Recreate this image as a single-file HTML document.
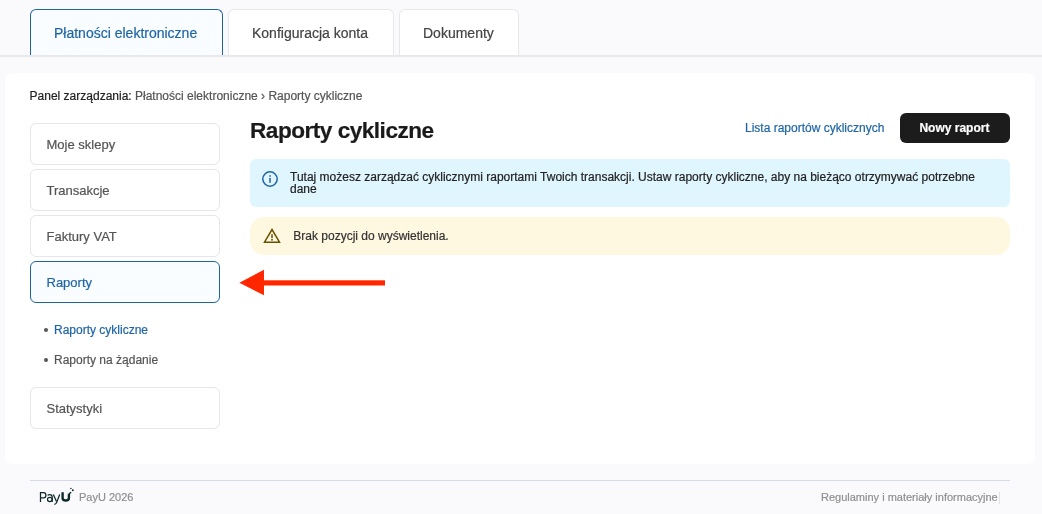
<!DOCTYPE html>
<html lang="pl">
<head>
<meta charset="utf-8">
<style>
html,body{margin:0;padding:0;}
body{width:1042px;height:514px;overflow:hidden;background:#fafafc;position:relative;font-family:"Liberation Sans",sans-serif;color:#222;}
.abs{position:absolute;white-space:nowrap;}
#root{-webkit-text-stroke-width:0.2px;}
.tab{position:absolute;top:9px;height:47px;box-sizing:border-box;border:1px solid #e8e8ea;border-bottom:none;border-radius:6px 6px 0 0;background:#fff;font-size:14px;color:#444;}
.tab span{position:absolute;left:23px;top:16px;line-height:14px;}
.tab.active{border-color:#1f65a6;background:#f9fdff;color:#1f65a6;}
.tabline{position:absolute;left:0;top:55px;width:1042px;height:2px;background:#e8e8ea;}
.card{position:absolute;left:5px;top:73px;width:1030px;height:391px;background:#fff;border-radius:8px;}
.crumb{position:absolute;left:29.6px;top:90px;font-size:12px;line-height:12px;color:#555;}
.crumb b{font-weight:normal;color:#222;}
.nav{position:absolute;left:30px;width:190px;height:42px;box-sizing:border-box;border:1px solid #e6e6e8;border-radius:6px;background:#fff;font-size:13px;color:#555;}
.nav span{position:absolute;left:15.5px;top:14px;line-height:13px;}
.nav.active{border-color:#1f65a6;background:#fafdff;color:#1f65a6;}
.sub{position:absolute;left:54px;font-size:12px;line-height:12px;color:#555;}
.sub.on{color:#1f65a6;}
.dot{position:absolute;left:44px;width:4px;height:4px;border-radius:50%;background:#555;}
h1{position:absolute;margin:0;left:250px;top:119.5px;font-size:22.6px;line-height:22px;font-weight:bold;letter-spacing:-0.5px;color:#1a1a1a;}
.link{position:absolute;left:745px;top:122px;font-size:12px;line-height:12px;color:#1f65a6;}
.btn{position:absolute;left:900px;top:113px;width:110px;height:30px;border-radius:6px;background:#1c1c1c;color:#fff;font-size:12px;font-weight:bold;}
.btn span{position:absolute;left:19.4px;top:9px;line-height:12px;}
.info{position:absolute;left:250px;top:159px;width:760px;height:48px;border-radius:6px;background:#e0f6fe;}
.info .txt{position:absolute;left:40px;top:12px;width:700px;font-size:12px;line-height:12px;color:#222;white-space:normal;}
.warn{position:absolute;left:250px;top:217px;width:760px;height:38px;border-radius:14px;background:#fff8e1;}
.warn .txt{position:absolute;left:43.3px;top:13px;font-size:12px;line-height:12px;color:#333;}
.fline{position:absolute;left:30px;top:480px;width:980px;height:1px;background:#d3dbea;}
.ftxt{position:absolute;font-size:11px;line-height:11px;color:#8f8f8f;}
</style>
</head>
<body><div id="root" style="position:absolute;left:0;top:0;width:1042px;height:514px;will-change:transform;">
<div class="tab active" style="left:30px;width:193px;"><span>Płatności elektroniczne</span></div>
<div class="tab" style="left:228px;width:166px;"><span>Konfiguracja konta</span></div>
<div class="tab" style="left:399px;width:120px;"><span>Dokumenty</span></div>
<div class="tabline"></div>

<div class="card"></div>
<div class="crumb"><b>Panel zarządzania:</b> Płatności elektroniczne › Raporty cykliczne</div>

<div class="nav" style="top:123px;"><span>Moje sklepy</span></div>
<div class="nav" style="top:169px;"><span>Transakcje</span></div>
<div class="nav" style="top:215px;"><span>Faktury VAT</span></div>
<div class="nav active" style="top:261px;"><span>Raporty</span></div>
<div class="dot" style="top:328px;"></div>
<div class="sub on" style="top:324px;">Raporty cykliczne</div>
<div class="dot" style="top:358px;"></div>
<div class="sub" style="top:354px;">Raporty na żądanie</div>
<div class="nav" style="top:387px;"><span>Statystyki</span></div>

<h1>Raporty cykliczne</h1>
<div class="link">Lista raportów cyklicznych</div>
<div class="btn"><span>Nowy raport</span></div>

<div class="info">
  <svg style="position:absolute;left:12px;top:12px" width="16" height="16" viewBox="0 0 16 16"><circle cx="8" cy="8" r="7.2" fill="none" stroke="#1f65a6" stroke-width="1.5"/><rect x="7.25" y="6.8" width="1.5" height="5" fill="#1f65a6"/><rect x="7.25" y="4.2" width="1.5" height="1.5" fill="#1f65a6"/></svg>
  <div class="txt">Tutaj możesz zarządzać cyklicznymi raportami Twoich transakcji. Ustaw raporty cykliczne, aby na bieżąco otrzymywać potrzebne dane</div>
</div>
<div class="warn">
  <svg style="position:absolute;left:13px;top:11px" width="18" height="16" viewBox="0 0 18 16"><path d="M9 1.5 L16.5 14.2 L1.5 14.2 Z" fill="none" stroke="#6b5000" stroke-width="1.5" stroke-linejoin="miter"/><rect x="8.25" y="6.2" width="1.5" height="4" fill="#6b5000"/><rect x="8.25" y="11" width="1.5" height="1.6" fill="#6b5000"/></svg>
  <div class="txt">Brak pozycji do wyświetlenia.</div>
</div>

<svg style="position:absolute;left:0;top:0" width="1042" height="514">
  <polygon points="239.4,282.8 264,269.8 264,295.2" fill="#ff2600"/>
  <rect x="263" y="280.3" width="122" height="5.2" fill="#ff2600"/>
</svg>

<div class="fline"></div>
<svg style="position:absolute;left:36px;top:484px" width="40" height="24" viewBox="36 484 40 24">
  <g fill="none" stroke="#0e2a2b" stroke-width="1.25">
    <path d="M40.5,501.9 V492.6 H43.6 C45.2,492.6 45.9,493.8 45.9,495.25 C45.9,496.7 45.2,497.9 43.6,497.9 H40.5"/>
    <path d="M47.6,495.4 C48.1,494.8 48.9,494.5 49.8,494.5 C51.4,494.5 52.2,495.3 52.2,496.9 V501.9"/>
    <ellipse cx="49.8" cy="499.5" rx="2.3" ry="2.05"/>
    <path d="M53.3,494.5 L56.5,501.5"/>
    <path d="M59.7,494.5 L56.4,502.9 Q55.9,504.3 54.3,504.3"/>
  </g>
  <path d="M62.6,492.3 V497.9 C62.6,499.9 63.8,500.5 65.8,500.5 C67.8,500.5 68.9,499.9 68.9,497.9 V492.8" fill="none" stroke="#0e2a2b" stroke-width="2.4"/>
  <path d="M67.3,495 L67.3,492 L69.9,492 Z" fill="#fafafc"/>
  <circle cx="70.5" cy="492.7" r="0.85" fill="#0e2a2b"/>
  <circle cx="72.8" cy="490.3" r="0.95" fill="#0e2a2b"/>
  <circle cx="70.9" cy="488.4" r="0.75" fill="#0e2a2b"/>
</svg>
<div class="ftxt" style="left:79px;top:492px;">PayU 2026</div>
<div class="ftxt" style="left:821px;top:492px;">Regulaminy i materiały informacyjne</div>
<div style="position:absolute;left:999px;top:492px;width:1px;height:12px;background:#e0e0e0;"></div>
</div></body>
</html>
